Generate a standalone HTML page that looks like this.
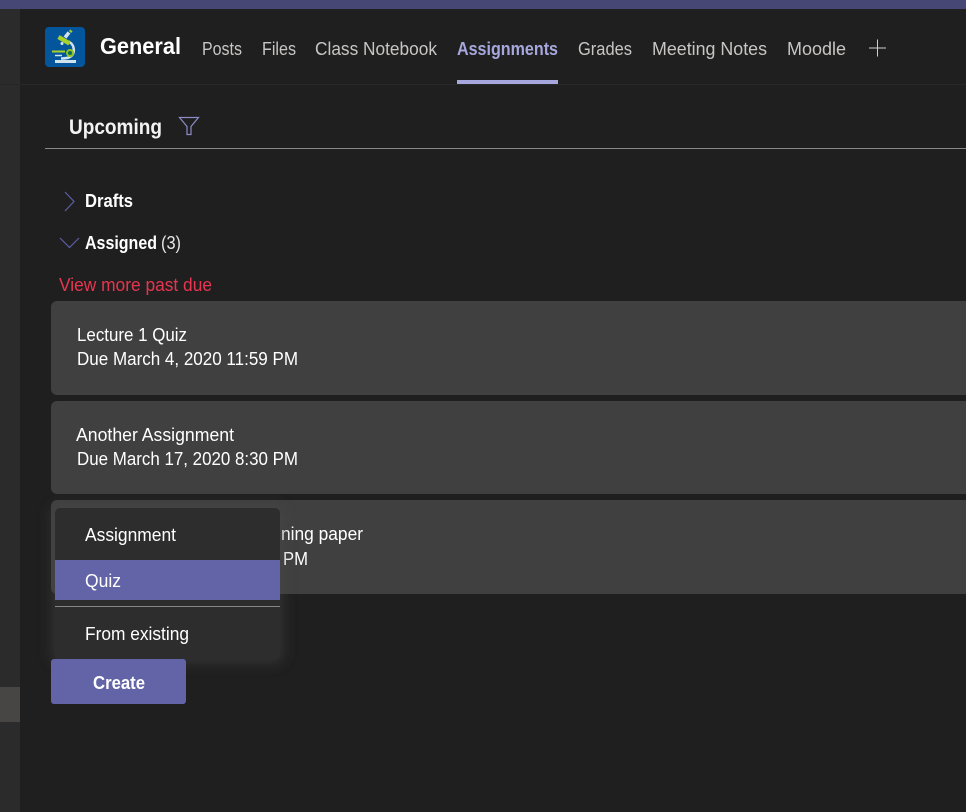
<!DOCTYPE html>
<html><head><meta charset="utf-8"><title>Assignments</title>
<style>
html,body{margin:0;padding:0;background:#1f1f1f;width:966px;height:812px;overflow:hidden}
svg{display:block}
text{font-family:"Liberation Sans",sans-serif;font-size:18px;fill:#fff}
.tab{fill:#c8c6c4}
.b{font-weight:bold}
</style></head><body>
<svg width="966" height="812" viewBox="0 0 966 812" xmlns="http://www.w3.org/2000/svg">
<defs><filter id="s" x="-20%" y="-20%" width="140%" height="140%"><feGaussianBlur stdDeviation="7"/></filter></defs>
<rect width="966" height="812" fill="#1f1f1f"/>
<rect x="0" y="0" width="20" height="812" fill="#2b2b2b"/>
<rect x="0" y="84" width="20" height="1" fill="#252525"/>
<rect x="0" y="687" width="20" height="35" fill="#484644"/>
<rect x="0" y="0" width="966" height="9" fill="#464775"/>
<rect x="20" y="84" width="946" height="1" fill="#292929"/>

<rect x="45" y="27" width="40" height="40" rx="4" fill="#03569c"/>
<g fill="none">
<rect x="55" y="60" width="21" height="3" fill="#cfe3ee"/>
<path d="M61 58.500c6 0 11-1 12.500-6 1-5-1-9-5-11" stroke="#cfe3ee" stroke-width="2.600"/>
<path d="M52 51.500h13" stroke="#a7d129" stroke-width="2"/>
<path d="M55 55.500h7" stroke="#cfe3ee" stroke-width="1.500"/>
<path d="M58.500 37l11 6.500" stroke="#a7d129" stroke-width="4.500"/>
<path d="M65 37.500l4-5" stroke="#cfe3ee" stroke-width="3.500"/>
<path d="M70 32l1.500-1.500" stroke="#a7d129" stroke-width="3"/>
<circle cx="62" cy="43.500" r="1.500" fill="#cfe3ee"/>
<circle cx="70" cy="53" r="3" fill="#0a6a5c" stroke="#8fc21f" stroke-width="2"/>
</g>

<text x="100" y="54" class="b" style="font-size:23px" textLength="81" lengthAdjust="spacingAndGlyphs">General</text>
<text x="202" y="55" class="tab" textLength="40" lengthAdjust="spacingAndGlyphs">Posts</text>
<text x="262" y="55" class="tab" textLength="34" lengthAdjust="spacingAndGlyphs">Files</text>
<text x="315" y="55" class="tab" textLength="122" lengthAdjust="spacingAndGlyphs">Class Notebook</text>
<text x="457" y="55" class="b" style="fill:#a6a7dc" textLength="101" lengthAdjust="spacingAndGlyphs">Assignments</text>
<text x="578" y="55" class="tab" textLength="54" lengthAdjust="spacingAndGlyphs">Grades</text>
<text x="652" y="55" class="tab" textLength="115" lengthAdjust="spacingAndGlyphs">Meeting Notes</text>
<text x="787" y="55" class="tab" textLength="59" lengthAdjust="spacingAndGlyphs">Moodle</text>
<rect x="457" y="80" width="101" height="4" fill="#a6a7dc"/>
<path d="M869 48h17M877.500 39.500v17" stroke="#d0cecc" stroke-width="1" fill="none"/>

<text x="69" y="134" class="b" style="font-size:21px;fill:#f3f3f3" textLength="93" lengthAdjust="spacingAndGlyphs">Upcoming</text>
<path d="M179.500 117.500h19l-7.500 9v8h-4v-8z" fill="none" stroke="#8b8cc7" stroke-width="1.200"/>
<rect x="45" y="148" width="921" height="1" fill="#8a8886"/>

<path d="M65 192l9 9.500-9 9.500" fill="none" stroke="#5b5fa6" stroke-width="1.200"/>
<text x="85" y="207" class="b" textLength="48" lengthAdjust="spacingAndGlyphs">Drafts</text>
<path d="M60 238l9.500 9.500 9.500-9.500" fill="none" stroke="#5b5fa6" stroke-width="1.200"/>
<text x="85" y="249" class="b" textLength="72" lengthAdjust="spacingAndGlyphs">Assigned</text>
<text x="161" y="249" textLength="20" lengthAdjust="spacingAndGlyphs" style="fill:#e6e6e6">(3)</text>
<text x="59" y="291" style="fill:#e73550" textLength="153" lengthAdjust="spacingAndGlyphs">View more past due</text>

<rect x="51" y="301" width="930" height="94" rx="6" fill="#404040"/>
<rect x="51" y="401" width="930" height="93" rx="6" fill="#404040"/>
<rect x="51" y="500" width="930" height="94" rx="6" fill="#404040"/>
<text x="77" y="341" textLength="110" lengthAdjust="spacingAndGlyphs">Lecture 1 Quiz</text>
<text x="77" y="365" textLength="221" lengthAdjust="spacingAndGlyphs">Due March 4, 2020 11:59 PM</text>
<text x="76" y="441" textLength="158" lengthAdjust="spacingAndGlyphs">Another Assignment</text>
<text x="77" y="465" textLength="221" lengthAdjust="spacingAndGlyphs">Due March 17, 2020 8:30 PM</text>
<text x="281" y="540" textLength="82" lengthAdjust="spacingAndGlyphs">ning paper</text>
<text x="283" y="565" textLength="25" lengthAdjust="spacingAndGlyphs">PM</text>

<rect x="53" y="506" width="229" height="156" rx="6" fill="#4a4a4a" opacity=".55" filter="url(#s)"/>
<rect x="55" y="508" width="225" height="152" rx="5" fill="#2d2d2d"/>
<rect x="55" y="560" width="225" height="40" fill="#6264a7"/>
<rect x="55" y="606" width="225" height="1" fill="#8a8886"/>
<text x="85" y="541" textLength="91" lengthAdjust="spacingAndGlyphs">Assignment</text>
<text x="85" y="587" textLength="36" lengthAdjust="spacingAndGlyphs">Quiz</text>
<text x="85" y="640" textLength="104" lengthAdjust="spacingAndGlyphs">From existing</text>

<rect x="51" y="659" width="135" height="45" rx="3" fill="#6264a7"/>
<text x="93" y="689" class="b" textLength="52" lengthAdjust="spacingAndGlyphs">Create</text>
</svg>
</body></html>
